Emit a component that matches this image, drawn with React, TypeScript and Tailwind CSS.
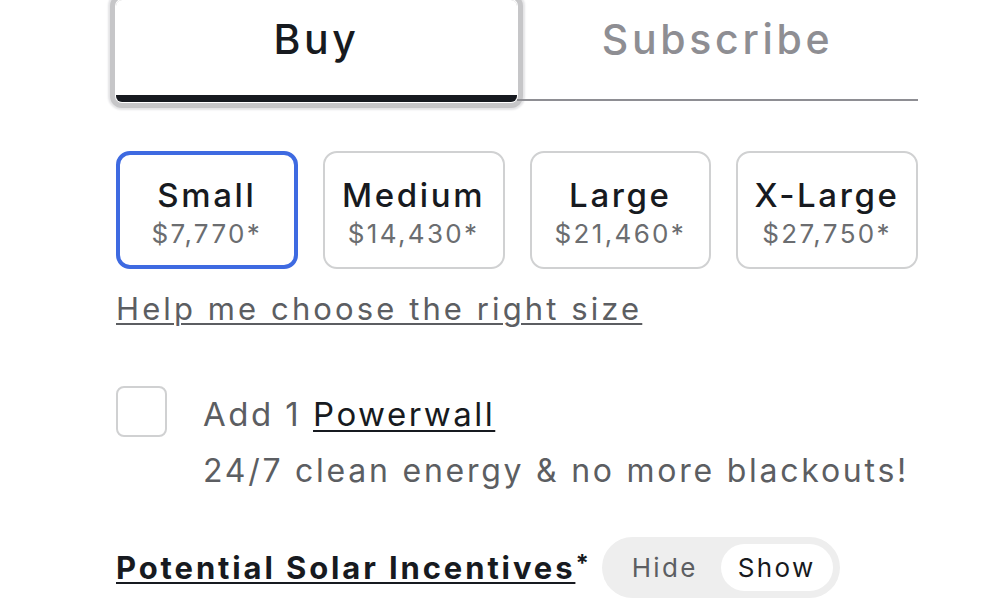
import { useState } from "react";

const sizes = [
  { name: "Small", price: "$7,770*" },
  { name: "Medium", price: "$14,430*" },
  { name: "Large", price: "$21,460*" },
  { name: "X-Large", price: "$27,750*" },
];

export default function App() {
  const [tab, setTab] = useState("buy");
  const [size, setSize] = useState("Small");
  const [showIncentives, setShowIncentives] = useState(true);
  const [powerwall, setPowerwall] = useState(false);

  return (
    <div className="h-[600px] w-[1000px] overflow-hidden bg-white font-['Inter',sans-serif]">
      <div className="ml-[116px] flex w-[802px] flex-col">
        {/* Buy / Subscribe tabs */}
        <div className="flex h-[102px]">
          <button
            onClick={() => setTab("buy")}
            className={`flex flex-1 items-start justify-center rounded-md pt-[19px] text-[41px] leading-none font-medium tracking-[0.09em] ${
              tab === "buy"
                ? "border-b-[7px] border-[#171a20] text-[#171a20] shadow-[0_0_0_1px_#ffffff,0_0_0_6px_#c6c6c8,0_0_2px_8px_#e4e4e6]"
                : "mb-[1px] border-b-2 border-[#8e8e93] text-[#8e8e93]"
            }`}
          >
            Buy
          </button>
          <button
            onClick={() => setTab("subscribe")}
            className={`flex flex-1 items-start justify-center rounded-md pt-[19px] text-[41px] leading-none font-medium tracking-[0.09em] ${
              tab === "subscribe"
                ? "border-b-[7px] border-[#171a20] text-[#171a20] shadow-[0_0_0_1px_#ffffff,0_0_0_6px_#c6c6c8,0_0_2px_8px_#e4e4e6]"
                : "mb-[1px] rounded-none border-b-2 border-[#8e8e93] text-[#8e8e93]"
            }`}
          >
            Subscribe
          </button>
        </div>

        {/* Size options */}
        <div className="mt-[49px] grid grid-cols-4 gap-[25px]">
          {sizes.map((s) => (
            <button
              key={s.name}
              onClick={() => setSize(s.name)}
              className={`flex h-[118px] flex-col items-center justify-center gap-[9px] rounded-[14px] pt-[5px] ${
                size === s.name ? "border-[4px] border-[#3e6ae1]" : "border-2 border-[#d0d1d2]"
              }`}
            >
              <span className="text-[33px] leading-none font-medium tracking-[0.08em] text-[#171a20]">
                {s.name}
              </span>
              <span className="text-[26px] leading-none tracking-[0.09em] text-[#6b6d70]">{s.price}</span>
            </button>
          ))}
        </div>

        <a
          href="#"
          className="mt-[24px] self-start text-[31px] leading-none tracking-[0.1em] text-[#5c5e62] underline decoration-2 underline-offset-[3px]"
        >
          Help me choose the right size
        </a>

        {/* Powerwall add-on */}
        <div className="mt-[62px] flex items-start gap-[36px]">
          <button
            onClick={() => setPowerwall(!powerwall)}
            className={`h-[51px] w-[51px] shrink-0 rounded-[8px] border-2 ${
              powerwall ? "border-[#3e6ae1] bg-[#3e6ae1]" : "border-[#d0d1d2] bg-white"
            }`}
          />
          <div className="flex flex-col">
            <div className="mt-[12px] text-[33px] leading-none tracking-[0.075em] text-[#5c5e62]">
              Add 1{" "}
              <a href="#" className="text-[#171a20] underline decoration-2 underline-offset-[4px]">
                Powerwall
              </a>
            </div>
            <div className="mt-[24px] text-[32px] leading-none tracking-[0.086em] text-[#5c5e62]">
              24/7 clean energy &amp; no more blackouts!
            </div>
          </div>
        </div>

        {/* Incentives toggle */}
        <div className="mt-[50px] flex items-center gap-[10px]">
          <span className="text-[31px] leading-none font-bold tracking-[0.093em] text-[#171a20]">
            <span className="underline decoration-2 underline-offset-[3px]">Potential Solar Incentives</span>
            <span className="align-top text-[24px]">*</span>
          </span>
          <div className="flex h-[61px] items-center rounded-full bg-[#eeeeee] p-[7px]">
            <button
              onClick={() => setShowIncentives(false)}
              className={`flex h-full w-[112px] items-center justify-center rounded-full text-[26px] leading-none tracking-[0.09em] ${
                !showIncentives ? "bg-white text-[#171a20]" : "text-[#5c5e62]"
              }`}
            >
              Hide
            </button>
            <button
              onClick={() => setShowIncentives(true)}
              className={`flex h-full w-[112px] items-center justify-center rounded-full text-[26px] leading-none tracking-[0.09em] ${
                showIncentives ? "bg-white text-[#171a20]" : "text-[#5c5e62]"
              }`}
            >
              Show
            </button>
          </div>
        </div>
      </div>
    </div>
  );
}
